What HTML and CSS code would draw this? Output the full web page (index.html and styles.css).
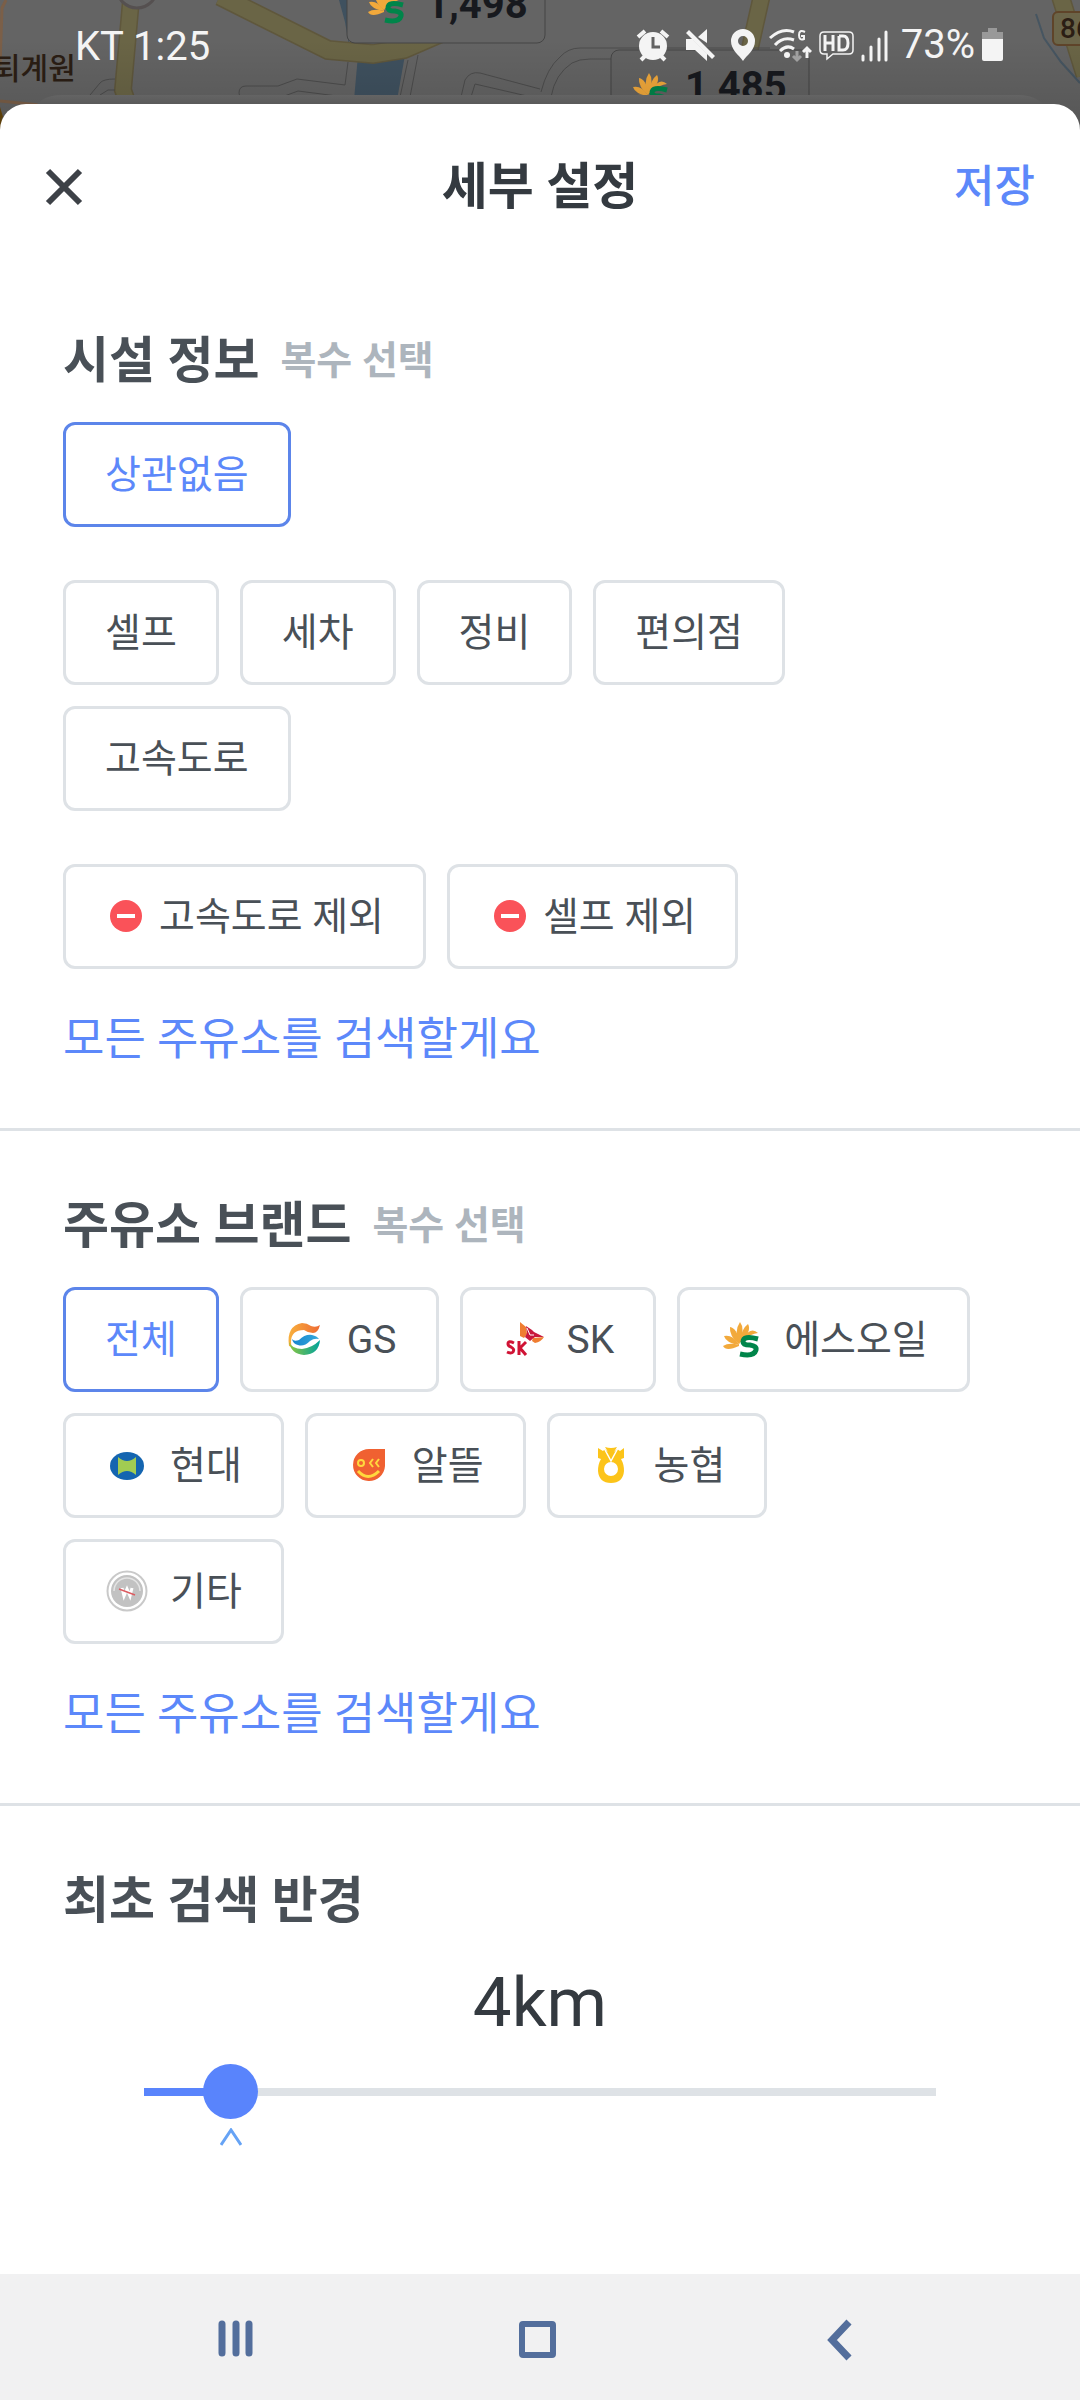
FILE: index.html
```html
<!DOCTYPE html>
<html lang="ko">
<head>
<meta charset="utf-8">
<meta name="viewport" content="width=device-width, initial-scale=1">
<title>세부 설정</title>
<link rel="stylesheet" href="styles.css">
</head>
<body>
<div class="screen">
  <div class="status">
    <svg class="map" viewBox="0 0 1080 140" preserveAspectRatio="xMidYMin slice" aria-hidden="true">
      <defs>
        <linearGradient id="shade" x1="0" y1="0" x2="0" y2="1">
          <stop offset="0" stop-color="#000" stop-opacity="0"/>
          <stop offset="1" stop-color="#000" stop-opacity="0.16"/>
        </linearGradient>
        <linearGradient id="shade2" gradientUnits="userSpaceOnUse" x1="0" y1="95" x2="0" y2="106">
          <stop offset="0" stop-color="#646464"/>
          <stop offset="1" stop-color="#585858"/>
        </linearGradient>
        <g id="soil">
          <g fill="#f2a93b">
            <path d="M16 23Q6 20 0 24Q3 30 16 24Z"/><path d="M16 22Q9 12 1 14Q3 21 16 23Z"/><path d="M17 21Q14 6 7 5Q6 14 16 22Z"/><path d="M17 21Q22 6 17 0Q11 9 16 20Z"/><path d="M18 20Q29 9 25 2Q18 7 17 20Z"/><path d="M19 18Q28 12 35 11Q28 4 20 16Z"/>
          </g>
          <path fill="none" stroke="#00854a" stroke-width="5" d="M35 17Q20 13 20 20Q20 23 27 23Q34 24 33 28Q31 35 17 32"/>
        </g>
      </defs>
      <rect width="1080" height="140" fill="#646464"/>
      <path d="M0 66L2 8L6 0M0 101L40 105" fill="none" stroke="#7b5f48" stroke-width="3"/>
      <path d="M131 0L123 90L130 110" fill="none" stroke="#5f573c" stroke-width="18"/>
      <path d="M131 0L123 90L130 110" fill="none" stroke="#6a6546" stroke-width="15"/>
      <circle cx="137" cy="-12" r="20" fill="#666" stroke="#555050" stroke-width="3"/>
      <path d="M339 0L345 22L349 45V0Z" fill="#3f515f"/>
      <path d="M358 55H405L397 100H354Z" fill="#3f515f"/>
      <path d="M220 -4L328 50L373 54L404 49L448 30" fill="none" stroke="#5f573c" stroke-width="20"/>
      <path d="M220 -4L328 50L373 54L404 49L448 30" fill="none" stroke="#6a6546" stroke-width="17"/>
      <path d="M763 -10L750 48" fill="none" stroke="#5f573c" stroke-width="18"/>
      <path d="M763 -10L750 48" fill="none" stroke="#6a6546" stroke-width="15"/>
      <path d="M1060 -5L1085 75" fill="none" stroke="#5f573c" stroke-width="19"/>
      <path d="M1060 -5L1085 75" fill="none" stroke="#6a6546" stroke-width="16"/>
      <path d="M1036 14L1044 38L1061 62L1080 83" fill="none" stroke="#465561" stroke-width="2"/>
      <g fill="none" stroke="#4c4c4c" stroke-width="1">
        <path d="M90 95L100 83Q103 79 115 79M100 95L108 90H115M348 62L345 85L297 79L278 86H246Q239 86 239 93Q239 98 246 98H279L298 91L345 97M408 60L400 97M418 55L410 97M461 97L465 80Q470 71 480 73L540 89M471 97L475 84L540 99"/>
        <path d="M541 92Q547 68 560 57Q568 48 580 48H770M551 97Q555 74 572 63Q579 59 590 59H612"/>
      </g>
      <text x="-7" y="79" class="map-place">퇴계원</text>
      <rect x="347" y="-20" width="198" height="63" rx="8" fill="#646464" stroke="#454545"/>
      <use href="#soil" x="368" y="-12"/>
      <text x="426" y="18" class="map-price">1,498</text>
      <rect x="611" y="50" width="198" height="64" rx="8" fill="#626262" stroke="#454545"/>
      <use href="#soil" x="632" y="73"/>
      <text x="685" y="100" class="map-price">1,485</text>
      <rect x="1053" y="12" width="50" height="33" rx="5" fill="#6b6549" stroke="#5f4429" stroke-width="2"/>
      <text x="1060" y="38" class="map-route">86</text>
      <rect y="40" width="1080" height="100" fill="url(#shade)"/>
      <path d="M0 107L3 117L0 121ZM0 120L5 118L3 131H0Z" fill="#5c3f0a"/>
      <path d="M30 140V115Q38 95 62 95H1018Q1042 95 1050 115V140Z" fill="url(#shade2)"/>
    </svg>
    <span class="carrier">KT 1:25</span>
    <div class="indicators">
      <div class="alerts">
        <svg width="34" height="34" viewBox="0 0 34 34" aria-hidden="true"><circle cx="17" cy="18" r="14" fill="#f4f4f4"/><path d="M17 9V19H24" fill="none" stroke="#626262" stroke-width="3"/><path d="M2 9L9 3M25 3L32 9M5 32L9 28M29 32L25 28" stroke="#f4f4f4" stroke-width="4"/></svg>
        <svg width="30" height="34" viewBox="0 0 30 34" aria-hidden="true"><path d="M1 11H7L22 26V33L10 22H1ZM13 9L22 1V15ZM4 2L30 28L27 31L1 5Z" fill="#f4f4f4"/></svg>
        <svg width="26" height="34" viewBox="0 0 26 34" aria-hidden="true"><path fill="#f4f4f4" fill-rule="evenodd" d="M13 1A12 12 0 0 0 1 13C1 22 9 27 13 33C17 27 25 22 25 13A12 12 0 0 0 13 1ZM13 8A5 5 0 1 1 13 18A5 5 0 1 1 13 8Z"/></svg>
      </div>
      <svg width="43" height="36" viewBox="0 0 43 36" aria-hidden="true"><path d="M1 11Q13 0 25 5M6 18Q14 9 25 13M11 24Q18 17 25 22" fill="none" stroke="#f4f4f4" stroke-width="3"/><circle cx="18" cy="28" r="3" fill="#f4f4f4"/><path d="M36 5Q30 2 30 8Q30 14 35 12V9H32" fill="none" stroke="#f4f4f4" stroke-width="2"/><path d="M28 24V33M24 29L28 33L32 29" fill="none" stroke="#a0a0a0" stroke-width="3"/><path d="M38 31V21M34 25L38 21L42 25" fill="none" stroke="#f4f4f4" stroke-width="3"/></svg>
      <svg width="35" height="34" viewBox="0 0 35 34" aria-hidden="true"><path d="M5 4H30Q34 4 34 8V22Q34 26 30 26H14L8 31V26H5Q1 26 1 22V8Q1 4 5 4Z" fill="none" stroke="#f4f4f4" stroke-width="1.5"/><path d="M6 7V23M14 7V23M6 15H14M20 8V22H24Q29 22 29 15Q29 8 24 8H20" fill="none" stroke="#f4f4f4" stroke-width="3"/></svg>
      <svg width="27" height="34" viewBox="0 0 27 34" aria-hidden="true"><path d="M2 28V32M10 19V32M18 11V32M25 4V32" stroke="#f4f4f4" stroke-width="3" stroke-linecap="round"/></svg>
      <span class="percent">73%</span>
      <svg width="21" height="36" viewBox="0 0 21 36" aria-hidden="true"><path d="M6 1H15V5H21V13H0V5H6Z" fill="#999"/><path d="M0 12H21V32Q21 34 19 34H2Q0 34 0 32Z" fill="#f4f4f4"/></svg>
    </div>
  </div>

  <main class="sheet">
    <header class="sheet-header">
      <button class="close" type="button" aria-label="닫기">
        <svg width="38" height="38" viewBox="0 0 38 38"><path d="M3 3L35 35M35 3L3 35" stroke="#3d4147" stroke-width="6"/></svg>
      </button>
      <h1 class="title">세부 설정</h1>
      <button class="save" type="button">저장</button>
    </header>

    <section class="section">
      <div class="section-head"><h2>시설 정보</h2><span class="hint">복수 선택</span></div>
      <div class="groups">
        <div class="chips"><button type="button" class="chip selected" aria-pressed="true">상관없음</button></div>
        <div class="chips">
          <button type="button" class="chip">셀프</button>
          <button type="button" class="chip">세차</button>
          <button type="button" class="chip">정비</button>
          <button type="button" class="chip">편의점</button>
          <button type="button" class="chip">고속도로</button>
        </div>
        <div class="chips">
          <button type="button" class="chip exclude"><svg width="42" height="42" viewBox="0 0 42 42" aria-hidden="true"><circle cx="21" cy="21" r="16" fill="#fa5259"/><path d="M12 21H30" stroke="#fff" stroke-width="4"/></svg>고속도로 제외</button>
          <button type="button" class="chip exclude"><svg width="42" height="42" viewBox="0 0 42 42" aria-hidden="true"><circle cx="21" cy="21" r="16" fill="#fa5259"/><path d="M12 21H30" stroke="#fff" stroke-width="4"/></svg>셀프 제외</button>
        </div>
      </div>
      <p class="summary">모든 주유소를 검색할게요</p>
    </section>

    <section class="section">
      <div class="section-head"><h2>주유소 브랜드</h2><span class="hint">복수 선택</span></div>
      <div class="chips">
        <button type="button" class="chip selected" aria-pressed="true">전체</button>
        <button type="button" class="chip brand"><svg width="44" height="42" viewBox="-1 0 44 42" aria-hidden="true">
          <defs><linearGradient id="gs1"><stop offset="0" stop-color="#f8b03c"/><stop offset="1" stop-color="#ee6b35"/></linearGradient><linearGradient id="gs2"><stop offset="0" stop-color="#1683cc"/><stop offset="1" stop-color="#35a9dd"/></linearGradient><linearGradient id="gs3"><stop offset="0" stop-color="#8cc63f"/><stop offset="1" stop-color="#00a39c"/></linearGradient></defs>
          <path d="M6 28Q3 8 19 5Q24 5 28 8Q33 10 37 7Q35 15 30 15Q25 15 21 12Q8 12 8 24Q8 27 9 29Z" fill="url(#gs1)"/><path d="M9 21Q11 24 16 22Q22 16 29 17Q34 18 36 21Q31 20 27 23Q21 29 15 27Q10 26 9 21Z" fill="url(#gs2)"/><path d="M6 24Q9 31 19 31Q29 30 37 22Q36 36 21 37Q8 36 6 24Z" fill="url(#gs3)"/></svg>GS</button>
        <button type="button" class="chip brand"><svg width="44" height="42" viewBox="-1 0 44 42" aria-hidden="true">
          <path d="M17 4L23 9L24 16L21 20L17 18Z" fill="#ef7d31"/><path d="M23 8L29 12L31 14L41 19L32 19L27 23L22 19L24 15Z" fill="#c8193c"/><path d="M24 10L27 17L31 17" fill="none" stroke="#fff" stroke-width="1"/><path d="M30 20L41 19Q38 24 32 25L29 23Z" fill="#ef7d31"/><path d="M11 25Q5 22 5 26Q5 28 8 29Q12 31 10 34Q8 36 4 34M16 23V37M23 24L17 30L23 37" fill="none" stroke="#d01335" stroke-width="3"/></svg>SK</button>
        <button type="button" class="chip brand"><svg width="44" height="42" viewBox="-1 0 44 42" aria-hidden="true"><use href="#soil" x="3" y="4"/></svg>에스오일</button>
        <button type="button" class="chip brand"><svg width="44" height="42" viewBox="-1 0 44 42" aria-hidden="true"><ellipse cx="21" cy="22" rx="17" ry="14" fill="#1465b0"/><path d="M12 13Q21 21 30 13V31Q21 23 12 31Z" fill="#a1cc52"/></svg>현대</button>
        <button type="button" class="chip brand"><svg width="44" height="42" viewBox="-1 0 44 42" aria-hidden="true"><path d="M21 5H37V22A16 16 0 1 1 21 5Z" fill="#f06131"/><circle cx="13" cy="19" r="3" fill="none" stroke="#ffd83d" stroke-width="2"/><path d="M25 15L22 19L25 23M31 15L28 19L31 23" fill="none" stroke="#ffd83d" stroke-width="2"/><path d="M10 27Q20 38 31 27" fill="none" stroke="#ffd83d" stroke-width="3"/></svg>알뜰</button>
        <button type="button" class="chip brand"><svg width="44" height="42" viewBox="-1 0 44 42" aria-hidden="true"><path fill="#fcc419" fill-rule="evenodd" d="M8 4L13 7L15 5L18 8L15 3Q21 5 27 3L24 8L27 5L30 7L34 4V14L31 15Q34 20 34 27Q33 39 21 39Q9 39 8 27Q8 20 11 15L8 14ZM21 18A7 7 0 1 0 21 32A7 7 0 1 0 21 18Z"/><path d="M14 4L21 17L28 4" fill="none" stroke="#fff" stroke-width="1.5"/></svg>농협</button>
        <button type="button" class="chip brand"><svg width="44" height="42" viewBox="-1 0 44 42" aria-hidden="true"><circle cx="21" cy="21" r="19.5" fill="#fff" stroke="#c9c9c9" stroke-width="2"/><circle cx="21" cy="21" r="16" fill="#c2c2c2"/><path d="M8 21A13 13 0 0 1 34 21" fill="none" stroke="#e4e4e4" stroke-width="1.5"/><path d="M16 18L18 26L21 19L24 26L26 18" fill="none" stroke="#fff" stroke-width="3"/><path d="M13 19L29 25" stroke="#dc5c61" stroke-width="1.5"/></svg>기타</button>
      </div>
      <p class="summary">모든 주유소를 검색할게요</p>
    </section>

    <section class="section">
      <div class="section-head"><h2><label for="radius">최초 검색 반경</label></h2></div>
      <output class="distance" for="radius">4km</output>
      <div class="slider">
        <input id="radius" type="range" min="0" max="100" value="8">
        <div class="tick"><svg width="22" height="18" viewBox="0 0 22 18" aria-hidden="true"><path d="M1 17L11 2L21 17" fill="none" stroke="#66a3f5" stroke-width="3"/></svg></div>
      </div>
    </section>
  </main>

  <nav class="navbar">
    <button type="button" aria-label="최근 앱"><svg width="42" height="42" viewBox="0 0 42 42"><path d="M7 5V34M21 5V34M34 5V34" stroke="#536e9c" stroke-width="7" stroke-linecap="round"/></svg></button>
    <button type="button" aria-label="홈"><svg width="42" height="42" viewBox="0 0 42 42"><rect x="5" y="5" width="31" height="31" rx="1" fill="none" stroke="#536e9c" stroke-width="6"/></svg></button>
    <button type="button" aria-label="뒤로"><svg width="42" height="42" viewBox="0 0 42 42"><path d="M30 3L13 21L30 39" fill="none" stroke="#536e9c" stroke-width="7"/></svg></button>
  </nav>
</div>
</body>
</html>
```
FILE: styles.css
```css
* {
  box-sizing: border-box;
}

body {
  margin: 0;
  background: #fff;
  color: #495057;
  font-family: Roboto, "Noto Sans CJK KR", sans-serif;
}

button {
  margin: 0;
  padding: 0;
  border: 0;
  background: none;
  color: inherit;
  font: inherit;
}

h1,
h2,
p {
  margin: 0;
}

svg {
  display: block;
  flex: none;
}

.screen {
  display: flex;
  flex-direction: column;
  min-height: 100vh;
}

/* Status bar over the dimmed map */
.status {
  position: relative;
  display: flex;
  justify-content: space-between;
  height: 104px;
  padding: 27px 77px 0 75px;
  color: #f4f4f4;
  font-size: 40px;
  line-height: 40px;
}

.map {
  position: absolute;
  top: 0;
  left: 0;
  width: 100%;
  height: 140px;
}

.map-place {
  fill: #2b1e14;
  font-size: 30px;
  font-weight: 500;
}

.map-price {
  fill: #17191e;
  font-size: 40px;
  font-weight: 700;
}

.map-route {
  fill: #2b1e14;
  font-size: 28px;
  font-weight: 500;
}

.carrier,
.indicators {
  position: relative;
}

.indicators {
  display: flex;
  align-items: center;
  gap: 7px;
  height: 36px;
}

.alerts {
  display: flex;
  gap: 15px;
  margin-right: 6px;
}

.percent {
  margin-left: 6px;
}

/* Sheet */
.sheet {
  position: relative;
  flex: 1;
  border-radius: 26px 26px 0 0;
  background: #fff;
}

.sheet-header {
  display: grid;
  grid-template-columns: 1fr auto 1fr;
  align-items: center;
  height: 162px;
  padding: 3px 45px 0;
}

.title {
  color: #343a40;
  font-size: 50px;
  font-weight: 700;
  line-height: 72px;
}

.close {
  justify-self: start;
}

.save {
  justify-self: end;
  color: #5c88fa;
  font-size: 44px;
  font-weight: 500;
  line-height: 66px;
}

.section {
  padding: 59px 63px 55px;
}

.section + .section {
  border-top: 3px solid #dee2e6;
}

.section-head {
  display: flex;
  align-items: center;
  gap: 21px;
  margin-bottom: 25px;
}

.section-head h2 {
  font-size: 50px;
  font-weight: 700;
  line-height: 72px;
}

.hint {
  color: #adb5bd;
  font-size: 39px;
  font-weight: 700;
  line-height: 72px;
}

.groups {
  display: grid;
  gap: 53px;
}

.chips {
  display: flex;
  flex-wrap: wrap;
  gap: 21px;
  padding-right: 21px;
}

.chip {
  display: flex;
  align-items: center;
  height: 105px;
  padding: 2px 39px 0;
  border: 3px solid #dee2e6;
  border-radius: 12px;
  font-size: 39px;
  line-height: 57px;
}

.chip svg {
  margin-bottom: 3px;
}

.chip.selected {
  border-color: #5c85ea;
  color: #5c88fa;
}

.chip.exclude {
  gap: 12px;
}

.chip.brand {
  gap: 21px;
}

.summary {
  margin-top: 38px;
  color: #5c88fa;
  font-size: 45px;
  line-height: 66px;
}

/* Radius slider */
.distance {
  display: block;
  color: #343a40;
  font-size: 69px;
  line-height: 82px;
  text-align: center;
}

.slider {
  padding: 20px 81px 0;
}

.slider input {
  display: block;
  width: 100%;
  height: 55px;
  margin: 0;
  appearance: none;
  border-radius: 4px;
  background: linear-gradient(to right, #5984fc 12%, #dee2e6 12%) center / 100% 8px no-repeat;
}

.slider input::-webkit-slider-thumb {
  width: 55px;
  height: 55px;
  appearance: none;
  border-radius: 50%;
  background: #5984fc;
}

.tick {
  display: flex;
  justify-content: center;
  width: 22%;
  margin-top: 9px;
}

/* System navigation */
.navbar {
  display: flex;
  align-items: center;
  justify-content: center;
  gap: 260px;
  height: 126px;
  padding: 6px 4px 0 0;
  background: #f1f1f2;
}
```
